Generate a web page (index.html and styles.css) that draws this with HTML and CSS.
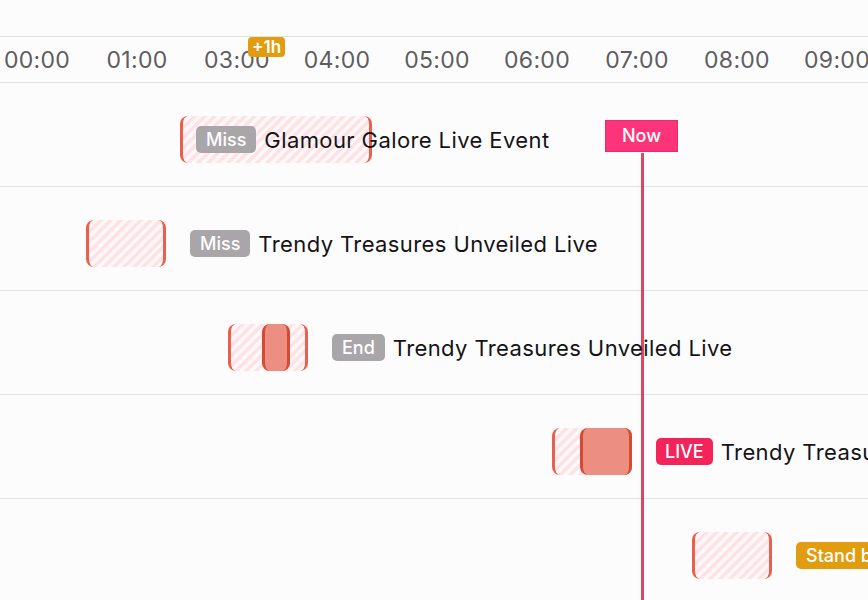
FILE: index.html
```html
<!DOCTYPE html>
<html>
<head>
<meta charset="utf-8">
<link rel="stylesheet" href="styles.css">
</head>
<body>
<div class="page">
  <div class="top"></div>
  <div class="ruler">
    <span class="tick">00:00</span>
    <span class="tick">01:00</span>
    <span class="tick">03:00</span>
    <span class="tick">04:00</span>
    <span class="tick">05:00</span>
    <span class="tick">06:00</span>
    <span class="tick">07:00</span>
    <span class="tick">08:00</span>
    <span class="tick">09:00</span>
    <span class="dst">+1h</span>
  </div>
  <div class="rows">
    <div class="row">
      <div class="block" style="margin-left:180px;width:192px"></div>
      <div class="label inside"><span class="badge miss">Miss</span><span class="title">Glamour Galore Live Event</span></div>
    </div>
    <div class="row">
      <div class="block" style="margin-left:86px;width:80px"></div>
      <div class="label"><span class="badge miss">Miss</span><span class="title">Trendy Treasures Unveiled Live</span></div>
    </div>
    <div class="row">
      <div class="block" style="margin-left:228px;width:80px"><div class="solid" style="left:31px;width:28px"></div></div>
      <div class="label"><span class="badge miss">End</span><span class="title">Trendy Treasures Unveiled Live</span></div>
    </div>
    <div class="row">
      <div class="block" style="margin-left:552px;width:80px"><div class="solid" style="left:25px;width:52px"></div></div>
      <div class="label"><span class="badge live">LIVE</span><span class="title">Trendy Treasures Unveiled Live</span></div>
    </div>
    <div class="row">
      <div class="block" style="margin-left:692px;width:80px"></div>
      <div class="label"><span class="badge stand">Stand by</span><span class="title">Trendy Treasures Unveiled Live</span></div>
    </div>
    <div class="now"><span class="now-tag">Now</span></div>
  </div>
</div>
</body>
</html>
```

FILE: styles.css
```css
html, body {
  margin: 0;
  padding: 0;
  background: #fdfcfd;
  overflow: hidden;
}
.page {
  width: 868px;
  height: 600px;
  overflow: hidden;
  font-family: Inter, "Noto Sans", sans-serif;
}
.top {
  height: 36px;
}
.ruler {
  position: relative;
  height: 45px;
  border-top: 1px solid #e2e0e2;
  border-bottom: 1px solid #e2e0e2;
  display: flex;
  align-items: center;
  margin-left: -13px;
  white-space: nowrap;
}
.tick {
  flex: 0 0 100px;
  text-align: center;
  font-size: 23px;
  color: #5e5d60;
  letter-spacing: 0.3px;
  padding-top: 1px;
}
.dst {
  position: absolute;
  left: 261px;
  top: 0;
  height: 20px;
  line-height: 20px;
  padding: 0 4px;
  border-radius: 4px;
  background: #e29c10;
  color: #fff;
  font-size: 17px;
  font-weight: 600;
}
.rows {
  position: relative;
}
.row {
  border-bottom: 1px solid #e4e2e4;
  display: flex;
  align-items: flex-start;
  padding-top: 33px;
  box-sizing: border-box;
  height: 104px;
  white-space: nowrap;
}
.block {
  position: relative;
  flex: 0 0 auto;
  height: 47px;
  box-sizing: border-box;
  border-left: 3px solid #e8614f;
  border-right: 3px solid #e8614f;
  border-radius: 8px;
  background: repeating-linear-gradient(135deg, #ffe2e6 0 3.5px, #fff8f9 3.5px 7px);
}
.solid {
  position: absolute;
  top: 0;
  bottom: 0;
  box-sizing: border-box;
  border-left: 3px solid #d34b35;
  border-right: 3px solid #d34b35;
  border-radius: 8px;
  background: #ec8f82;
}
.label {
  position: relative;
  z-index: 1;
  display: flex;
  align-items: center;
  height: 47px;
  margin-left: 24px;
}
.label.inside {
  margin-left: -176px;
}
.badge {
  height: 27px;
  line-height: 27px;
  padding: 0 10px;
  border-radius: 5px;
  color: #fff;
  font-size: 18px;
  font-weight: 500;
}
.miss {
  background: #a8a6a9;
}
.live {
  background: #f2245a;
  padding: 0 9px;
}
.stand {
  background: #e29c10;
}
.title {
  margin-left: 8px;
  font-size: 22px;
  letter-spacing: 0.4px;
  color: #141416;
}
.now {
  position: absolute;
  left: 641px;
  top: 70px;
  width: 3px;
  height: 460px;
  background: #e04660;
}
.now-tag {
  position: absolute;
  left: -36px;
  top: -33px;
  width: 73px;
  height: 32px;
  box-sizing: border-box;
  border: 1px solid #ea2a6a;
  background: #fd3479;
  color: #fff;
  font-size: 18px;
  font-weight: 500;
  line-height: 30px;
  text-align: center;
}
```
